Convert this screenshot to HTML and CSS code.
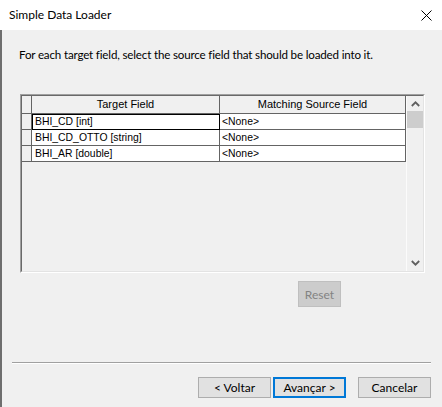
FILE: index.html
```html
<!DOCTYPE html>
<html>
<head>
<meta charset="utf-8">
<link rel="stylesheet" href="styles.css">
</head>
<body>
<div class="window">
  <div class="titlebar">
    <span class="title">Simple Data Loader</span>
    <svg class="close" width="11" height="11" viewBox="0 0 11 11"><path d="M0.5 0.5 L10.5 10.5 M10.5 0.5 L0.5 10.5" stroke="#000" stroke-width="1" fill="none"/></svg>
  </div>
  <div class="content">
    <p class="intro">For each target field, select the source field that should be loaded into it.</p>
    <div class="grid-box">
      <div class="grid-inner">
        <div class="table">
          <div class="row head">
            <div class="cell rh"></div>
            <div class="cell c1">Target Field</div>
            <div class="cell c2">Matching Source Field</div>
          </div>
          <div class="row">
            <div class="cell rh"></div>
            <div class="cell c1 focus">BHI_CD [int]</div>
            <div class="cell c2">&lt;None&gt;</div>
          </div>
          <div class="row">
            <div class="cell rh"></div>
            <div class="cell c1">BHI_CD_OTTO [string]</div>
            <div class="cell c2">&lt;None&gt;</div>
          </div>
          <div class="row">
            <div class="cell rh"></div>
            <div class="cell c1">BHI_AR [double]</div>
            <div class="cell c2">&lt;None&gt;</div>
          </div>
        </div>
        <div class="scroll">
          <div class="sbtn up"><svg width="9" height="6" viewBox="0 0 9 6"><polyline points="0.8,5 4.5,1.3 8.2,5" fill="none" stroke="#606060" stroke-width="1.8"/></svg></div>
          <div class="thumb"></div>
          <div class="track"></div>
          <div class="sbtn down"><svg width="9" height="6" viewBox="0 0 9 6"><polyline points="0.8,1 4.5,4.7 8.2,1" fill="none" stroke="#606060" stroke-width="1.8"/></svg></div>
        </div>
      </div>
    </div>
    <div class="reset-row"><button class="btn reset" disabled>Reset</button></div>
    <div class="sep"></div>
    <div class="buttons">
      <button class="btn">&lt; Voltar</button>
      <button class="btn default">Avançar &gt;</button>
      <button class="btn cancel">Cancelar</button>
    </div>
  </div>
</div>
</body>
</html>
```

FILE: styles.css
```css
* { box-sizing: border-box; }
html, body { margin: 0; padding: 0; }
body {
  width: 442px;
  height: 407px;
  overflow: hidden;
  background: #f0f0f0;
  font-family: Lato, "Noto Sans", sans-serif;
  color: #000;
}
.window {
  width: 442px;
  height: 407px;
  display: flex;
  flex-direction: column;
}
.titlebar {
  height: 30px;
  flex: none;
  background: #fff;
  display: flex;
  align-items: center;
  justify-content: space-between;
  padding: 0 10px 0 9px;
}
.title {
  font-size: 12px;
  line-height: 16px;
}
.close { display: block; }
.content {
  flex: 1;
  background: #f0f0f0;
  border-left: 2px solid #6e6e6e;
  display: flex;
  flex-direction: column;
}
.intro {
  margin: 17px 0 0 17px;
  font-size: 11.6px;
  letter-spacing: -0.17px;
  line-height: 16px;
  white-space: nowrap;
}
.grid-box {
  margin: 31px 0 0 18px;
  width: 405px;
  height: 179px;
  border: 1px solid;
  border-color: #a0a0a0 #fff #fff #a0a0a0;
}
.grid-inner {
  height: 100%;
  border: 1px solid;
  border-color: #696969 #e3e3e3 #e3e3e3 #696969;
  display: flex;
}
.table {
  width: 384px;
  font-family: "Liberation Sans", Arial, sans-serif;
  font-size: 10.4px;
}
.row {
  display: flex;
  height: 16px;
}
.row.head { height: 18px; }
.cell {
  border-right: 1px solid #646464;
  border-bottom: 1px solid #646464;
  white-space: nowrap;
  overflow: hidden;
  line-height: 15px;
}
.rh { width: 10px; background: #f0f0f0; }
.c1 { width: 188px; background: #fff; padding-left: 3px; }
.c2 { width: 186px; background: #fff; padding-left: 2px; }
.head .c1, .head .c2 {
  background: #f0f0f0;
  text-align: center;
  padding-left: 0;
  line-height: 17px;
  font-size: 11px;
}
.focus {
  border-color: #000;
  box-shadow: inset 1px 1px 0 #000;
}
.scroll {
  width: 17px;
  border-left: 1px solid #fbfbfb;
  display: flex;
  flex-direction: column;
}
.sbtn {
  height: 15px;
  display: flex;
  align-items: center;
  justify-content: center;
}
.sbtn.down { height: 17px; }
.thumb {
  height: 17px;
  background: #cdcdcd;
}
.track { flex: 1; }
.reset-row {
  margin-top: 8px;
  display: flex;
  padding-left: 296px;
}
.btn {
  width: 73px;
  height: 21px;
  background: #e1e1e1;
  border: 1px solid #adadad;
  font-family: Lato, "Noto Sans", sans-serif;
  font-size: 12px;
  color: #000;
  padding: 0;
  margin: 0;
  line-height: 17px;
}
.btn.reset {
  width: 43px;
  height: 26px;
  background: #cccccc;
  border-color: #bfbfbf;
  color: #838383;
}
.btn.default {
  border: 2px solid #0078d7;
}
.sep {
  margin: 55px 0 0 10px;
  width: 419px;
  border-top: 1px solid #a0a0a0;
  border-bottom: 1px solid #fff;
}
.buttons {
  margin-top: 13px;
  display: flex;
  gap: 2px;
  padding-left: 196px;
}
.btn.cancel { margin-left: 10px; }
```
